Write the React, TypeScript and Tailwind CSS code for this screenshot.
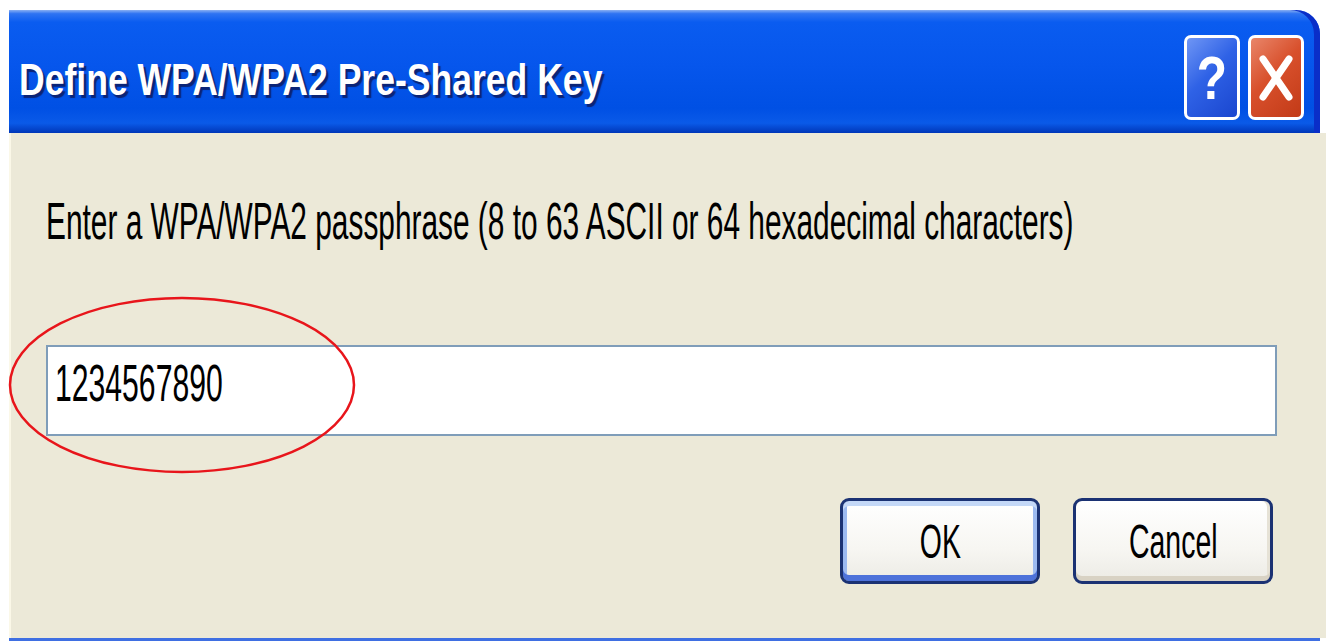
import React from "react";

function CaptionButton({ kind }: { kind: "help" | "close" }) {
  const face =
    kind === "help"
      ? "bg-[linear-gradient(135deg,#6f96f5_0%,#2f62e6_45%,#1a46cf_100%)]"
      : "bg-[linear-gradient(135deg,#e9866a_0%,#d8502c_45%,#c23a17_100%)]";
  return (
    <div
      className={`flex h-[85px] w-[56px] items-center justify-center rounded-[7px] border-[3px] border-white ${face}`}
    >
      {kind === "help" ? (
        <span className="inline-block origin-center scale-x-[0.8] text-[62px] font-bold leading-none text-white">
          ?
        </span>
      ) : (
        <svg width="38" height="50" viewBox="0 0 38 50">
          <path d="M6 6 L32 44 M32 6 L6 44" stroke="#fff" strokeWidth="7" strokeLinecap="round" />
        </svg>
      )}
    </div>
  );
}

function DialogButton({ label, isDefault }: { label: string; isDefault?: boolean }) {
  const inner = isDefault
    ? "shadow-[inset_0_5px_0_#c4d8f7,inset_0_-6px_0_#4d72da,inset_4px_0_0_#9cbaf0,inset_-4px_0_0_#9cbaf0]"
    : "shadow-[inset_0_-5px_0_#d8d2c4,inset_-3px_0_0_#e6e2d6]";
  return (
    <button
      className={`flex h-[86px] w-[200px] items-center justify-center rounded-[9px] border-[3px] border-[#1b3273] bg-[linear-gradient(to_bottom,#ffffff_0%,#f7f6f2_60%,#ecebe5_100%)] ${inner}`}
    >
      <span className="inline-block origin-center scale-x-[0.58] text-[49px] leading-none text-black">
        {label}
      </span>
    </button>
  );
}

export default function App() {
  return (
    <div className="relative h-[641px] w-[1326px] overflow-hidden bg-white pl-[9px] pt-[10px] font-['Liberation_Sans',Arial,sans-serif]">
      <div className="flex h-[631px] w-[1311px] flex-col">
        {/* caption bar */}
        <div className="flex h-[123px] shrink-0 items-start justify-between rounded-tr-[24px] bg-[linear-gradient(to_bottom,#8ab0f2_0%,#2f74f2_3%,#0a5cf0_10%,#0656ec_45%,#0050e4_80%,#0a5ae8_92%,#0036b8_100%)] pl-[10px] pr-[16px] shadow-[inset_-6px_0_0_#0a2ec8]">
          <span className="mt-[47px] inline-block origin-left scale-x-[0.79] whitespace-nowrap text-[45px] font-bold leading-none text-white [text-shadow:3px_3px_1px_#0b2476]">
            Define WPA/WPA2 Pre-Shared Key
          </span>
          <div className="mt-[25px] flex gap-[8px]">
            <CaptionButton kind="help" />
            <CaptionButton kind="close" />
          </div>
        </div>

        {/* dialog body */}
        <div className="flex min-h-0 flex-1">
          <div className="flex-1 border-l-2 border-[#fbf8e8] bg-[#ece9d8] pl-[35px] pt-[62px]">
            <div className="whitespace-nowrap">
              <span className="inline-block origin-left scale-x-[0.574] text-[52px] leading-none text-black">
                Enter a WPA/WPA2 passphrase (8 to 63 ASCII or 64 hexadecimal characters)
              </span>
            </div>

            <div className="mt-[98px] h-[91px] w-[1231px] border-2 border-[#7f9db9] bg-white pl-[7px] pt-[10px]">
              <span className="inline-block origin-left scale-x-[0.58] text-[52px] leading-none text-black">
                1234567890
              </span>
            </div>

            <div className="mt-[62px] flex w-[1227px] justify-end gap-[33px]">
              <DialogButton label="OK" isDefault />
              <DialogButton label="Cancel" />
            </div>
          </div>
          <div className="w-[9px] shrink-0 border-l-2 border-[#2c52e0] bg-[#0612b0]" />
        </div>
        <div className="h-[3px] shrink-0 bg-[#3f6fe2]" />
      </div>

      {/* red marker around the key */}
      <svg
        className="pointer-events-none absolute left-[7px] top-[296px]"
        width="350"
        height="178"
        viewBox="0 0 350 178"
      >
        <ellipse cx="175" cy="89" rx="172" ry="87" fill="none" stroke="#e8151b" strokeWidth="2.5" />
      </svg>
    </div>
  );
}
